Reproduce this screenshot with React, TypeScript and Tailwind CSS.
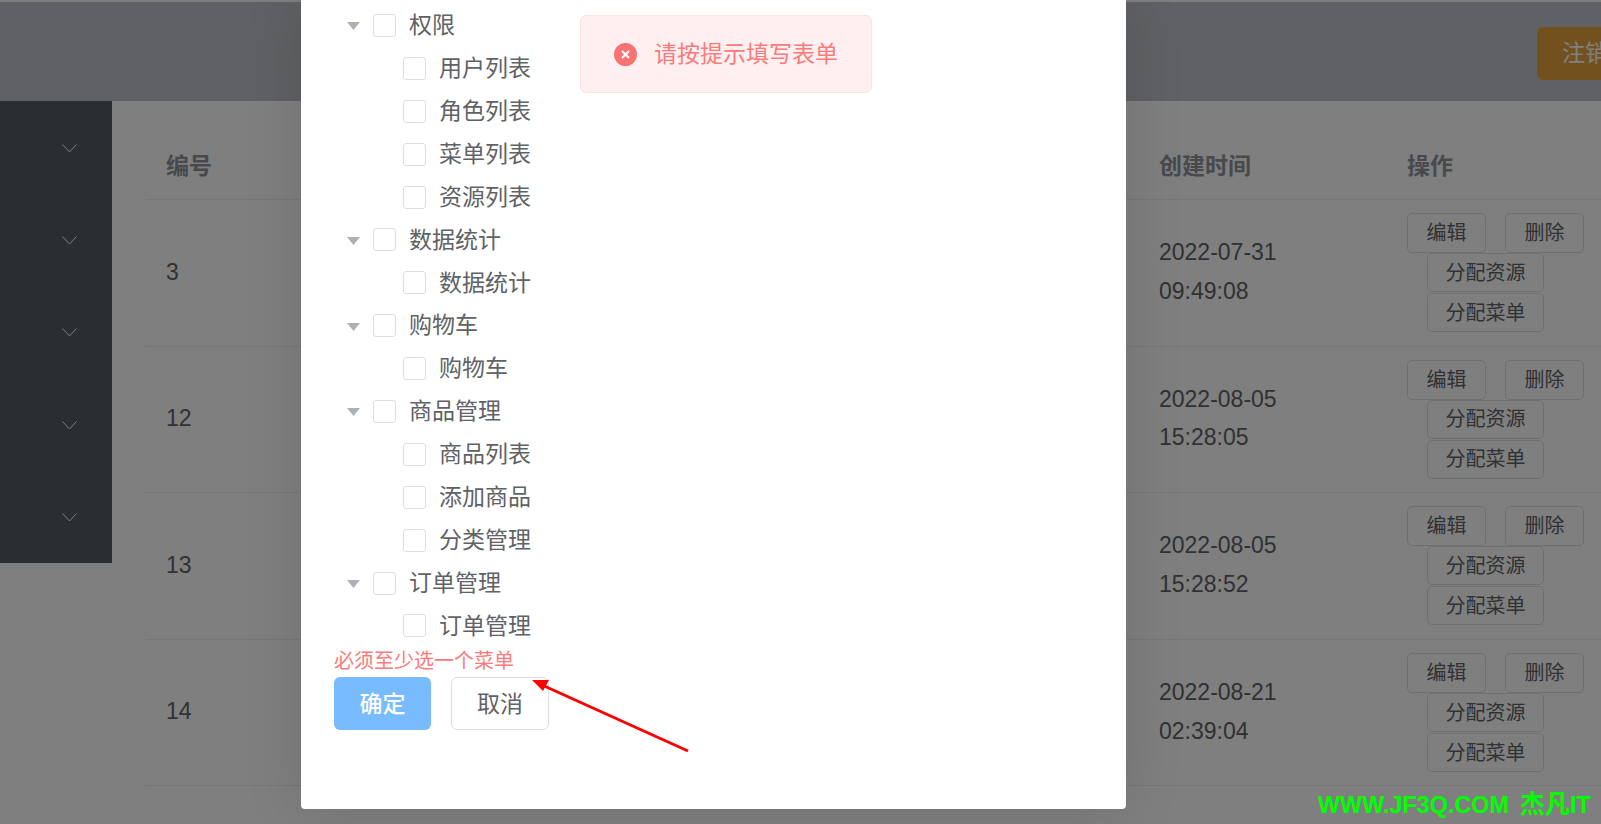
import React from 'react';

const rows = [
    { id: '3', date: '2022-07-31', time: '09:49:08' },
    { id: '12', date: '2022-08-05', time: '15:28:05' },
    { id: '13', date: '2022-08-05', time: '15:28:52' },
    { id: '14', date: '2022-08-21', time: '02:39:04' },
];

const tree = [
    { name: '权限', children: ['用户列表', '角色列表', '菜单列表', '资源列表'] },
    { name: '数据统计', children: ['数据统计'] },
    { name: '购物车', children: ['购物车'] },
    { name: '商品管理', children: ['商品列表', '添加商品', '分类管理'] },
    { name: '订单管理', children: ['订单管理'] },
];

function Chevron() {
    return (
        <svg width="15" height="9" viewBox="0 0 15 9" fill="none" stroke="#ffffff" strokeWidth="1">
            <path d="M0.5 0.5 L7.5 8 L14.5 0.5" />
        </svg>
    );
}

function OpButton({ label, className = '' }: { label: string; className?: string }) {
    return (
        <button className={`rounded-[5px] border border-[#dcdfe6] text-[20px] text-[#606266] flex items-center justify-center ${className}`}>
            {label}
        </button>
    );
}

function TreeRow({ label, child }: { label: string; child?: boolean }) {
    return (
        <div className={`h-[42.9px] flex items-center text-[23px] text-[#606266] ${child ? 'pl-[102px]' : 'pl-[46px]'}`}>
            {!child && (
                <svg width="13" height="8" viewBox="0 0 13 8" className="mr-[13px] mt-[2px]">
                    <path d="M0 0 H13 L6.5 8 Z" fill="#aeb0b7" />
                </svg>
            )}
            <span className="w-[23px] h-[23px] rounded-[3px] border border-[#dcdfe6] bg-white" />
            <span className="ml-[13px]">{label}</span>
        </div>
    );
}

export default function App() {
    return (
        <div className="relative h-screen overflow-hidden bg-white font-['Liberation_Sans','Noto_Sans_CJK_SC',sans-serif]">
            {/* page underneath */}
            <div className="h-[2px] bg-white" />
            <header className="h-[99px] bg-[#c0c2c9] flex justify-end items-start pt-[25px]">
                <button className="w-[64px] h-[53px] rounded-l-[6px] bg-[#e6a23c] text-white text-[23px] text-left pl-[25px] overflow-hidden whitespace-nowrap">
                    注销
                </button>
            </header>
            <div className="flex items-start">
                <aside className="w-[112px] bg-[#545c64] shrink-0">
                    {[0, 1, 2, 3, 4].map((i) => (
                        <div key={i} className="h-[92.4px] flex items-center pl-[62px] pt-[2px]">
                            <Chevron />
                        </div>
                    ))}
                </aside>
                <main className="flex-1 pl-[34px] pt-[32px] text-[23px] text-[#606266]">
                    <div className="h-[67px] border-b border-[#ebeef5] flex items-center font-bold text-[#909399]">
                        <div className="pl-[20px] w-[1013px]">编号</div>
                        <div className="w-[248px]">创建时间</div>
                        <div>操作</div>
                    </div>
                    {rows.map((row) => (
                        <div key={row.id} className="h-[146.6px] border-b border-[#ebeef5] flex items-center">
                            <div className="pl-[20px] w-[1013px] pb-[2px]">{row.id}</div>
                            <div className="w-[248px] leading-[38.6px] pb-[2px]">
                                <div>{row.date}</div>
                                <div>{row.time}</div>
                            </div>
                            <div className="flex flex-col items-start">
                                <div className="flex gap-[19px]">
                                    <OpButton label="编辑" className="w-[79px] h-[40px]" />
                                    <OpButton label="删除" className="w-[79px] h-[40px]" />
                                </div>
                                <OpButton label="分配资源" className="w-[117px] h-[39px] ml-[20px]" />
                                <OpButton label="分配菜单" className="w-[117px] h-[39px] ml-[20px] mt-px" />
                            </div>
                        </div>
                    ))}
                </main>
            </div>

            {/* dialog mask */}
            <div className="absolute inset-0 bg-black/50" />

            {/* dialog */}
            <div className="absolute left-[301px] top-0 w-[825px] h-[809px] bg-white rounded-b-[4px] shadow-[0_0_60px_rgba(0,0,0,0.12)] pt-[4px]">
                {tree.map((node) => (
                    <div key={node.name}>
                        <TreeRow label={node.name} />
                        {node.children.map((c) => (
                            <TreeRow key={c} label={c} child />
                        ))}
                    </div>
                ))}
                <div className="pl-[33px] h-[27px] flex items-center text-[20px] text-[#f97b7b]">必须至少选一个菜单</div>
                <div className="pl-[33px] mt-[3px] flex gap-[20px] text-[23px]">
                    <button className="w-[97px] h-[53px] rounded-[6px] bg-[#79bbff] text-white font-medium">确定</button>
                    <button className="w-[98px] h-[53px] rounded-[6px] border border-[#dcdfe6] bg-white text-[#606266]">取消</button>
                </div>
            </div>

            {/* message toast */}
            <div className="absolute left-[580px] top-[15px] w-[292px] h-[78px] rounded-[6px] bg-[#fef0f0] border border-[#fde2e2] flex items-center pl-[33px] text-[23px] text-[#f97b7b]">
                <svg width="23" height="23" viewBox="0 0 23 23">
                    <circle cx="11.5" cy="11.5" r="11.5" fill="#f97272" />
                    <path d="M8 8 L15 15 M15 8 L8 15" stroke="#fff" strokeWidth="2" />
                </svg>
                <span className="ml-[17px]">请按提示填写表单</span>
            </div>

            {/* red annotation arrow */}
            <svg className="absolute left-[520px] top-[670px]" width="180" height="90" viewBox="0 0 180 90" fill="none">
                <path d="M168 81 L22 15" stroke="#ff0000" strokeWidth="3" />
                <path d="M12 10 L29 10 L23 21 Z" fill="#ff0000" />
            </svg>

            {/* watermark */}
            <div className="absolute left-[1318px] top-[790px] text-[23.4px] leading-[28px] font-bold text-[#00ff00] whitespace-nowrap">
                WWW.JF3Q.COM<span className="ml-[11px] text-[25px]">杰凡</span>IT
            </div>
        </div>
    );
}
